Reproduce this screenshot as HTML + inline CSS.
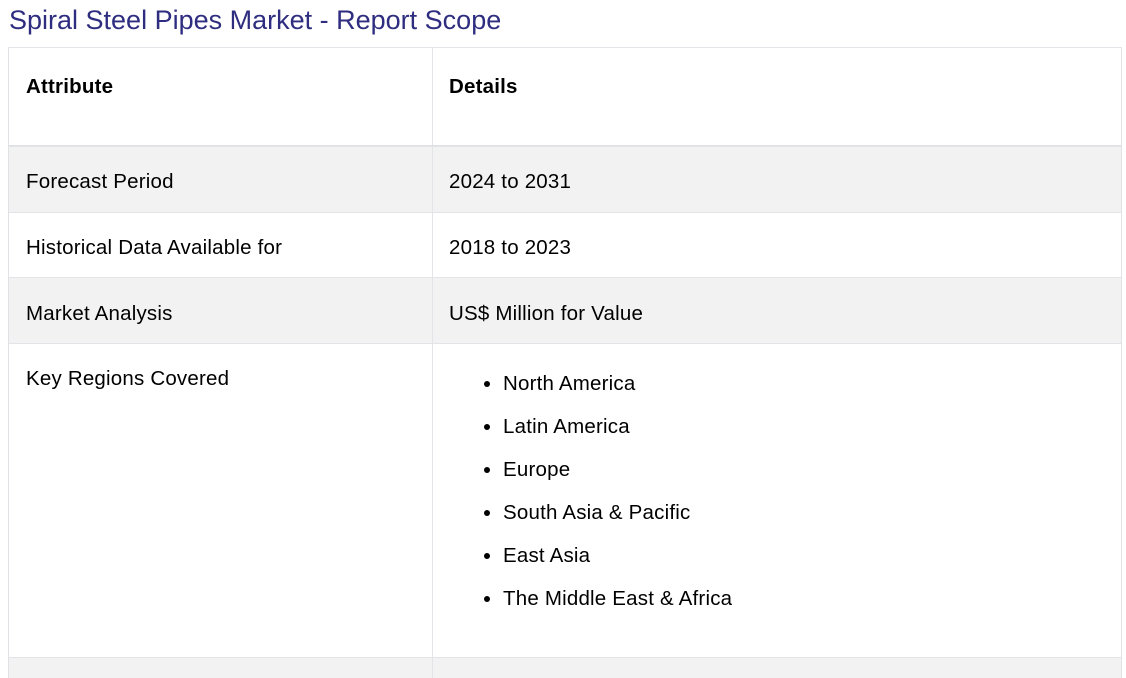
<!DOCTYPE html>
<html><head><style>
body{margin:0;width:1126px;height:663px;overflow:hidden;background:#fff;font-family:"Liberation Sans",sans-serif;color:#000;position:relative}
.t{position:absolute;left:9px;top:5px;font-size:27px;color:#2e2d7f;white-space:nowrap}
.r{position:absolute;left:8px;width:1112px;border-left:1px solid #dfe1e5;border-right:1px solid #dfe1e5;border-top:1px solid #e2e4e8}
.c{position:absolute;top:0;bottom:0;left:423px;border-left:1px solid #e2e4e8}
.x{position:absolute;font-size:20.5px;white-space:nowrap;letter-spacing:0.2px}
.g{background:#f2f2f2}
li{margin:0 0 20px 0;font-size:20.5px;line-height:23px;letter-spacing:0.2px}
ul{position:absolute;left:494px;top:372px;margin:0;padding:0 0 0 9px}
</style></head><body>
<div class="t">Spiral Steel Pipes Market - Report Scope</div>
<div class="r" style="top:47px;height:97px;border-bottom:2px solid #dfe1e5"><div class="c"></div></div>
<div class="r g" style="top:146px;height:66px"><div class="c"></div></div>
<div class="r" style="top:212px;height:65px"><div class="c"></div></div>
<div class="r g" style="top:277px;height:66px"><div class="c"></div></div>
<div class="r" style="top:343px;height:314px"><div class="c"></div></div>
<div class="r g" style="top:657px;height:20px"><div class="c"></div></div>
<div class="x" style="left:26px;top:75px;font-weight:bold">Attribute</div>
<div class="x" style="left:449px;top:75px;font-weight:bold">Details</div>
<div class="x" style="left:26px;top:170px">Forecast Period</div>
<div class="x" style="left:449px;top:170px">2024 to 2031</div>
<div class="x" style="left:26px;top:236px">Historical Data Available for</div>
<div class="x" style="left:449px;top:236px">2018 to 2023</div>
<div class="x" style="left:26px;top:302px">Market Analysis</div>
<div class="x" style="left:449px;top:302px">US$ Million for Value</div>
<div class="x" style="left:26px;top:367px">Key Regions Covered</div>
<ul>
<li>North America</li><li>Latin America</li><li>Europe</li><li>South Asia &amp; Pacific</li><li>East Asia</li><li>The Middle East &amp; Africa</li>
</ul>
</body></html>
